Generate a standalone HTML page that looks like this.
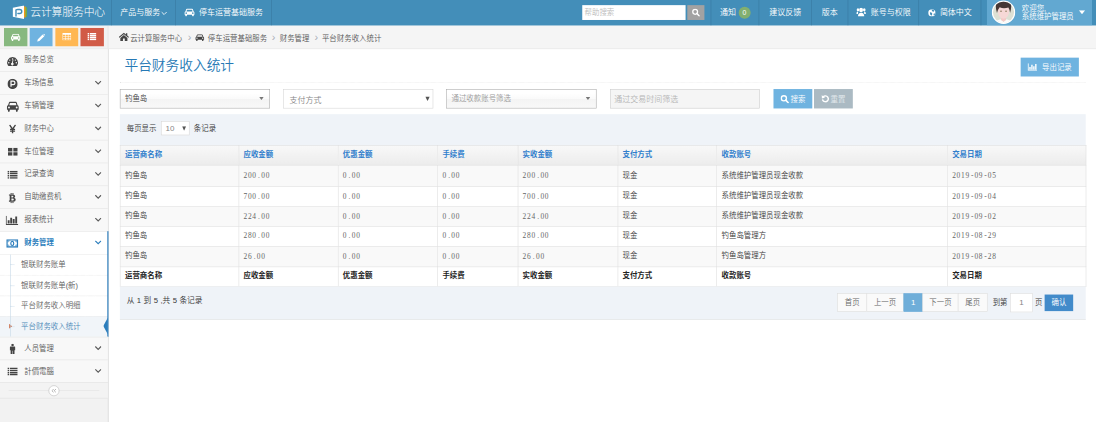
<!DOCTYPE html>
<html lang="zh-CN">
<head>
<meta charset="utf-8">
<title>平台财务收入统计</title>
<style>
*{box-sizing:border-box;margin:0;padding:0}
html,body{width:1096px;height:422px;overflow:hidden;background:#fff}
body{font-family:"Liberation Sans","Noto Sans CJK SC",sans-serif;font-size:13px;font-weight:350;color:#393939}
#stage{position:absolute;left:0;top:0;width:1920px;height:740px;transform:scale(0.5708333);transform-origin:0 0;background:#fff;overflow:hidden}
.abs{position:absolute}
svg{display:block}
/* navbar */
#navbar{position:absolute;left:0;top:0;width:1920px;height:45px;background:#438eb9;color:#fff}
#brand{position:absolute;left:53px;top:0;line-height:44px;font-size:19px;font-weight:300;color:#fff;white-space:nowrap;letter-spacing:-0.3px}
.nitem{position:absolute;top:0;height:45px;line-height:44px;font-size:14px;color:#fff;border-left:1px solid #38789f;white-space:nowrap;text-align:center}
.nitem svg{display:inline-block;vertical-align:middle}
/* sidebar */
#sidebar{position:absolute;left:0;top:45px;width:190px;height:695px;background:#f2f2f2;border-right:1px solid #ccc}
.sc{position:absolute;top:4px;width:40.5px;height:32px;border-radius:0}
.li{position:absolute;left:0;width:189px;height:40px;border-top:1px solid #e5e5e5;background:#f8f8f8;color:#585858;font-size:13px;line-height:39px}
.li .t{position:absolute;left:42.5px;top:-1.5px;white-space:nowrap}
.li .ic{position:absolute;left:7px;top:0;width:30px;height:39px}
.li .ar{position:absolute;right:11px;top:15px}
.sub{position:absolute;left:0;width:189px;height:36px;background:#fff;border-top:1px dotted #e4e4e4;color:#616161;font-size:13px;line-height:34px}
.sub .t{position:absolute;left:37px;top:0;white-space:nowrap}
.sub:before{content:"";position:absolute;left:18px;top:17px;width:7px;border-top:1px dotted #9dbdd6}
/* main */
#crumbs{position:absolute;left:190px;top:45px;width:1730px;height:41px;background:#f5f5f5;border-bottom:1px solid #e5e5e5;font-size:13px;color:#555;line-height:43px;white-space:nowrap}
#crumbs span{position:absolute;top:0}
h1{position:absolute;left:218px;top:102px;font-size:24px;font-weight:350;color:#2679b5;line-height:26px;white-space:nowrap}
.sel{position:absolute;top:156px;height:34px;width:263px;font-size:13px;line-height:32px;white-space:nowrap}
.btn{position:absolute;color:#fff;font-size:13px;text-align:center;white-space:nowrap}
table{position:absolute;left:210px;top:254px;width:1692px;border-collapse:collapse;table-layout:fixed;font-size:13px}
td,th{height:35.3px;padding:0 8px;border:1px solid #ddd;text-align:left;vertical-align:middle;white-space:nowrap;overflow:hidden}
thead th{color:#307ecc;font-weight:bold;background:linear-gradient(#f8f8f8,#ececec);border-bottom:1px solid #ddd}
tbody tr:nth-child(odd) td{background:#f9f9f9}
tbody td{color:#393939}
td,th{padding-bottom:4px}
thead th{height:35px;padding-bottom:5.4px}
tbody tr:first-child td{height:36.5px}
tfoot th{height:34.7px;padding-bottom:5.6px}
tbody tr:nth-child(n+4) td{padding-bottom:5.6px}
tbody tr:nth-child(n+4) td.m{padding-bottom:1.6px}
td.m{padding-bottom:0;font-family:"Liberation Serif",serif;color:#666;font-size:13px;letter-spacing:1.3px}
td.m i{display:inline-block;width:7.8px;text-align:center;letter-spacing:0;font-style:normal}
tfoot th{color:#222;font-weight:bold;background:#fff}
.pg{position:absolute;top:514px;height:32px;line-height:31px;border:1px solid #ddd;background:#fafafa;color:#666;font-size:13px;text-align:center;margin-left:-1px}
</style>
</head>
<body>
<div id="stage">

<!-- NAVBAR -->
<div id="navbar">
  <svg class="abs" style="left:21px;top:9px" width="28" height="25" viewBox="0 0 28 25">
    <path d="M20 2.500 H24 V21.500 H20 Z" fill="#f39c12"/>
    <path d="M24 3.500 H26.400 V20.500 H24 Z" fill="#6fae45"/>
    <path d="M1.500 4.500 L21 0.500 V24.500 L1.500 20.500 Z" fill="#fff"/>
    <path d="M7 19 V9.600 Q6 7.600 10 7.600 H13.600 A3.500 3.500 0 0 1 13.600 14.600 H10.400" fill="none" stroke="#438eb9" stroke-width="2.500" stroke-linecap="round"/>
  </svg>
  <div id="brand">云计算服务中心</div>
  <div class="nitem" style="left:195px;width:112px">产品与服务<svg width="11" height="7" viewBox="0 0 11 7" style="margin-left:1px"><path d="M1 1 L5.5 5.5 L10 1" fill="none" stroke="#fff" stroke-width="1.5"/></svg></div>
  <div class="nitem" style="left:307px;width:169px;border-right:1px solid #38789f">
    <svg width="18" height="14" viewBox="0 0 18 14" style="margin-right:8px;margin-top:-3px"><path d="M3.2 1.2 Q3.6 0 5 0 H13 Q14.4 0 14.8 1.2 L16.2 5 Q18 5.4 18 7.4 V11 H16.4 V12.6 Q16.4 14 15 14 Q13.6 14 13.6 12.6 V11 H4.4 V12.6 Q4.4 14 3 14 Q1.6 14 1.6 12.6 V11 H0 V7.4 Q0 5.4 1.8 5 Z M4.6 2 L3.6 5 H14.4 L13.4 2 Z M3.2 6.6 A1.4 1.4 0 1 0 3.2 9.4 A1.4 1.4 0 1 0 3.2 6.6 Z M14.8 6.6 A1.4 1.4 0 1 0 14.8 9.4 A1.4 1.4 0 1 0 14.8 6.6 Z" fill="#fff" fill-rule="evenodd"/></svg>停车运营基础服务</div>
  <!-- search -->
  <div class="abs" style="left:1020px;top:9px;width:181px;height:26px;background:#fff;color:#bbb;font-size:13px;line-height:26px;padding-left:4px">帮助搜索</div>
  <div class="abs" style="left:1204px;top:9px;width:30px;height:26px;background:#a2a2a2">
    <svg class="abs" style="left:8px;top:6px" width="14" height="14" viewBox="0 0 14 14"><circle cx="5.8" cy="5.8" r="4.2" fill="none" stroke="#fff" stroke-width="2.2"/><path d="M8.8 8.8 L13 13" stroke="#fff" stroke-width="2.6" stroke-linecap="round"/></svg>
  </div>
  <div class="nitem" style="left:1245px;width:85px"><span style="margin-right:4px">通知</span><span style="display:inline-block;vertical-align:middle;margin-top:-2px;height:21px;min-width:21px;line-height:21px;border-radius:11px;background:#82af6f;font-size:12px;padding:0 6px;color:#fff">0</span></div>
  <div class="nitem" style="left:1329px;width:92px">建议反馈</div>
  <div class="nitem" style="left:1421px;width:64px">版本</div>
  <div class="nitem" style="left:1485px;width:124px"><svg width="17" height="16" viewBox="0 0 17 14" preserveAspectRatio="none" style="margin-right:9px;margin-top:-4px"><circle cx="8.5" cy="4" r="3.4" fill="#fff"/><path d="M3 14 Q3 8 8.5 8 Q14 8 14 14 Z" fill="#fff"/><circle cx="3" cy="3.4" r="2.3" fill="#fff"/><circle cx="14" cy="3.4" r="2.3" fill="#fff"/><path d="M0 10 Q0 6 3.4 6.4 L3 10 Z M17 10 Q17 6 13.6 6.4 L14 10 Z" fill="#fff"/></svg>账号与权限</div>
  <div class="nitem" style="left:1609px;width:110px;border-right:1px solid #38789f"><svg width="13" height="13" viewBox="0 0 13 13" style="margin-right:8px;margin-top:-2px"><circle cx="6.5" cy="6.5" r="6.5" fill="#fff"/><path d="M6 1.200 Q9 0.600 11 2.400 Q10.600 4.400 8.400 4.600 Q6.400 3.600 6 1.200 Z M3 5.600 Q5.600 5.400 7 7.400 Q7.600 10 5.600 11.800 Q2.200 9.400 3 5.600 Z M9.600 8 Q11 7 12.400 7.800 Q12 10.200 10.200 11.400 Q9 10 9.600 8 Z" fill="#438eb9"/></svg>简体中文</div>
  <div class="abs" style="left:1729px;top:0;width:184px;height:45px;background:#62a8d1">
    <svg class="abs" style="left:8px;top:0" width="42" height="43" viewBox="0 0 42 43">
      <defs><clipPath id="avc"><circle cx="21" cy="21.5" r="18.6"/></clipPath></defs>
      <circle cx="21" cy="21.5" r="19.5" fill="#dde0d4" stroke="#fff" stroke-width="2"/>
      <g clip-path="url(#avc)"><g transform="translate(21 24) scale(1.22) translate(-21 -24)">
        <path d="M6 43 Q8 34 16.500 32 L21 35.500 L25.500 32 Q34 34 36 43 Z" fill="#fbfbfb"/>
        <path d="M17.500 28 H24.500 V33 L21 35.500 L17.500 33 Z" fill="#f3c9c6"/>
        <path d="M12.6 17 Q12.6 30.500 21 31.400 Q29.400 30.500 29.400 17 Q28 9 21 9 Q14 9 12.600 17 Z" fill="#f6d8d6"/>
        <path d="M11.6 23 Q6.500 6 17 5 Q21 3.500 25 5 Q35.500 6 30.400 23 Q30 18 28 15 Q21 17.500 15.500 14.600 Q12.600 18 11.600 23 Z" fill="#463735"/>
        <ellipse cx="17.4" cy="20.4" rx="1.3" ry="0.9" fill="#8a7a5c"/><ellipse cx="24.6" cy="20.4" rx="1.3" ry="0.9" fill="#8a7a5c"/>
      </g></g>
    </svg>
    <div class="abs" style="left:61px;top:7px;font-size:13px;line-height:15px;color:#fff;white-space:nowrap">欢迎您,<br>系统维护管理员</div>
    <svg class="abs" style="left:161px;top:18px" width="11" height="7" viewBox="0 0 11 7"><path d="M0 0 H11 L5.5 7 Z" fill="#fff"/></svg>
  </div>
</div>

<!-- SIDEBAR -->
<div id="sidebar">
  <div class="sc" style="left:7px;background:#87b87f"><svg class="abs" style="left:12px;top:10px" width="17" height="13" viewBox="0 0 18 14"><path d="M3.2 1.2 Q3.6 0 5 0 H13 Q14.4 0 14.8 1.2 L16.2 5 Q18 5.4 18 7.4 V11 H16.4 V12.6 Q16.4 14 15 14 Q13.6 14 13.6 12.6 V11 H4.4 V12.6 Q4.4 14 3 14 Q1.6 14 1.6 12.6 V11 H0 V7.4 Q0 5.4 1.8 5 Z M4.6 2 L3.6 5 H14.4 L13.4 2 Z M3.2 6.6 A1.4 1.4 0 1 0 3.2 9.4 A1.4 1.4 0 1 0 3.2 6.6 Z M14.8 6.6 A1.4 1.4 0 1 0 14.8 9.4 A1.4 1.4 0 1 0 14.8 6.6 Z" fill="#fff" fill-rule="evenodd"/></svg></div>
  <div class="sc" style="left:51.800px;background:#6fb3e0"><svg class="abs" style="left:13.500px;top:9.500px" width="14" height="14" viewBox="0 0 14 14"><path d="M0 14 L1 10 L9.6 1.4 L12.6 4.4 L4 13 Z M10.4 0.6 Q11.4 -0.4 12.4 0.6 L13.4 1.6 Q14.4 2.6 13.4 3.6 Z" fill="#fff"/></svg></div>
  <div class="sc" style="left:96.600px;background:#ffb752"><svg class="abs" style="left:12px;top:9px" width="16" height="12.500" viewBox="0 0 16 13"><path d="M0 0 H16 V13 H0 Z M1 3 V5.6 H5 V3 Z M6 3 V5.6 H10 V3 Z M11 3 V5.6 H15 V3 Z M1 6.6 V9 H5 V6.6 Z M6 6.6 V9 H10 V6.6 Z M11 6.6 V9 H15 V6.6 Z M1 10 V12 H5 V10 Z M6 10 V12 H10 V10 Z M11 10 V12 H15 V10 Z" fill="#fff" fill-rule="evenodd"/></svg></div>
  <div class="sc" style="left:141.400px;background:#d15b47"><svg class="abs" style="left:12px;top:9px" width="16" height="12.500" viewBox="0 0 16 13"><path d="M0 0 H3 V2.6 H0 Z M4.4 0 H16 V2.6 H4.4 Z M0 3.5 H3 V6 H0 Z M4.4 3.5 H16 V6 H4.4 Z M0 7 H3 V9.5 H0 Z M4.4 7 H16 V9.5 H4.4 Z M0 10.4 H3 V13 H0 Z M4.4 10.4 H16 V13 H4.4 Z" fill="#fff"/></svg></div>
  <div class="li" style="top:40px"><div class="ic"><svg class="abs" style="left:5px;top:14px" width="20" height="17" viewBox="0 0 18 16"><path d="M9 0 A9 9 0 0 1 16.6 13.8 Q16.2 14.6 15.4 14.6 H2.6 Q1.8 14.6 1.4 13.8 A9 9 0 0 1 9 0 Z" fill="#444"/><circle cx="9" cy="3" r="1.2" fill="#f8f8f8"/><circle cx="4.4" cy="5" r="1.2" fill="#f8f8f8"/><circle cx="13.6" cy="5" r="1.2" fill="#f8f8f8"/><circle cx="2.8" cy="9.4" r="1.2" fill="#f8f8f8"/><circle cx="15.2" cy="9.4" r="1.2" fill="#f8f8f8"/><path d="M10.4 4.6 L9.6 9.4 A2.2 2.2 0 1 1 8 9.2 L9.2 4.4 Z" fill="#f8f8f8"/></svg></div><span class="t">服务总览</span></div>
  <div class="li" style="top:80px"><div class="ic"><svg class="abs" style="left:6px;top:12px" width="18" height="18" viewBox="0 0 16 16"><circle cx="8" cy="8" r="8" fill="#444"/><path d="M5.6 12.4 V3.8 H9 A2.7 2.7 0 0 1 9 9.2 H6.4" fill="none" stroke="#f8f8f8" stroke-width="1.9"/></svg></div><span class="t">车场信息</span><svg class="ar" width="12" height="8" viewBox="0 0 12 8"><path d="M1 1 L6 6 L11 1" fill="none" stroke="#5a5a5a" stroke-width="2"/></svg></div>
  <div class="li" style="top:120px"><div class="ic"><svg class="abs" style="left:5px;top:12px" width="21" height="18" viewBox="0 0 18 14" preserveAspectRatio="none"><path d="M3.2 1.2 Q3.6 0 5 0 H13 Q14.4 0 14.8 1.2 L16.2 5 Q18 5.4 18 7.4 V11 H16.4 V12.6 Q16.4 14 15 14 Q13.6 14 13.6 12.6 V11 H4.4 V12.6 Q4.4 14 3 14 Q1.6 14 1.6 12.6 V11 H0 V7.4 Q0 5.4 1.8 5 Z M4.6 2 L3.6 5 H14.4 L13.4 2 Z M3.2 6.6 A1.4 1.4 0 1 0 3.2 9.4 A1.4 1.4 0 1 0 3.2 6.6 Z M14.8 6.6 A1.4 1.4 0 1 0 14.8 9.4 A1.4 1.4 0 1 0 14.8 6.6 Z" fill="#444" fill-rule="evenodd"/></svg></div><span class="t">车辆管理</span><svg class="ar" width="12" height="8" viewBox="0 0 12 8"><path d="M1 1 L6 6 L11 1" fill="none" stroke="#5a5a5a" stroke-width="2"/></svg></div>
  <div class="li" style="top:160px"><div class="ic"><svg class="abs" style="left:9px;top:12px" width="12" height="16" viewBox="0 0 12 16"><path d="M0.8 0.6 L6 8.4 L11.2 0.6 M6 8 V16 M1.6 8.6 H10.4 M1.6 11.8 H10.4" fill="none" stroke="#444" stroke-width="2.4"/></svg></div><span class="t">财务中心</span><svg class="ar" width="12" height="8" viewBox="0 0 12 8"><path d="M1 1 L6 6 L11 1" fill="none" stroke="#5a5a5a" stroke-width="2"/></svg></div>
  <div class="li" style="top:200px"><div class="ic"><svg class="abs" style="left:7px;top:13px" width="17" height="14" viewBox="0 0 17 14"><path d="M0 0 H7.6 V6.2 H0 Z M9.4 0 H17 V6.2 H9.4 Z M0 7.8 H7.6 V14 H0 Z M9.4 7.8 H17 V14 H9.4 Z" fill="#444"/></svg></div><span class="t">车位管理</span><svg class="ar" width="12" height="8" viewBox="0 0 12 8"><path d="M1 1 L6 6 L11 1" fill="none" stroke="#5a5a5a" stroke-width="2"/></svg></div>
  <div class="li" style="top:240px"><div class="ic"><svg class="abs" style="left:6px;top:13px" width="18" height="14" viewBox="0 0 18 14"><path d="M0 0 H3 V2.6 H0 Z M4.4 0 H18 V2.6 H4.4 Z M0 3.8 H3 V6.4 H0 Z M4.4 3.8 H18 V6.4 H4.4 Z M0 7.6 H3 V10.2 H0 Z M4.4 7.6 H18 V10.2 H4.4 Z M0 11.4 H3 V14 H0 Z M4.4 11.4 H18 V14 H4.4 Z" fill="#444"/></svg></div><span class="t">记录查询</span><svg class="ar" width="12" height="8" viewBox="0 0 12 8"><path d="M1 1 L6 6 L11 1" fill="none" stroke="#5a5a5a" stroke-width="2"/></svg></div>
  <div class="li" style="top:280px"><div class="ic"><svg class="abs" style="left:8px;top:12px" width="13" height="18" viewBox="0 0 13 18"><path d="M0.500 2.600 H7.200 Q11.600 2.600 11.600 5.800 Q11.600 7.800 9.800 8.600 Q12.600 9.200 12.600 12 Q12.600 15.400 8 15.400 H0.500 V13.400 H2 V4.600 H0.500 Z M5 4.800 V7.800 H6.600 Q8.400 7.800 8.400 6.300 Q8.400 4.800 6.600 4.800 Z M5 9.800 V13.200 H7 Q9.200 13.200 9.200 11.500 Q9.200 9.800 7 9.800 Z M3.600 0 H5.400 V3 H3.600 Z M6.800 0 H8.600 V3 H6.800 Z M3.600 15 H5.400 V18 H3.600 Z M6.800 15 H8.600 V18 H6.800 Z" fill="#444" fill-rule="evenodd"/></svg></div><span class="t">自助缴费机</span><svg class="ar" width="12" height="8" viewBox="0 0 12 8"><path d="M1 1 L6 6 L11 1" fill="none" stroke="#5a5a5a" stroke-width="2"/></svg></div>
  <div class="li" style="top:320px"><div class="ic"><svg class="abs" style="left:3px;top:12px" width="22" height="16" viewBox="0 0 20 16" preserveAspectRatio="none"><path d="M0 0 H1.500 V14.500 H20 V16 H0 Z M3.200 8 H6.200 V13.400 H3.200 Z M7.200 3.400 H10.200 V13.400 H7.200 Z M11.200 5.800 H14.200 V13.400 H11.200 Z M15.200 1.400 H18.200 V13.400 H15.200 Z" fill="#444"/></svg></div><span class="t">报表统计</span><svg class="ar" width="12" height="8" viewBox="0 0 12 8"><path d="M1 1 L6 6 L11 1" fill="none" stroke="#5a5a5a" stroke-width="2"/></svg></div>
  <div class="li" style="top:360px;color:#2b7dbc;font-weight:bold;background:#fff"><div class="ic"><svg class="abs" style="left:4px;top:13px" width="21" height="15" viewBox="0 0 21 15"><path d="M0 0 H21 V15 H0 Z M2.400 2.400 V12.600 H18.600 V2.400 Z" fill="#2b7dbc" fill-rule="evenodd"/><path d="M2 6 Q6 6 6 2 H2 Z M19 6 Q15 6 15 2 H19 Z M2 9 Q6 9 6 13 H2 Z M19 9 Q15 9 15 13 H19 Z" fill="#2b7dbc" opacity="0.550"/><ellipse cx="10.500" cy="7.500" rx="2.600" ry="3.600" fill="none" stroke="#2b7dbc" stroke-width="2"/></svg></div><span class="t">财务管理</span><svg class="ar" width="12" height="8" viewBox="0 0 12 8"><path d="M1 1 L6 6 L11 1" fill="none" stroke="#2b7dbc" stroke-width="2"/></svg></div>
  <div class="abs" style="left:0;top:400px;width:189px;height:1px;background:#e5e5e5"></div>
  <div class="sub" style="top:401px;border-top:0"><span class="t">银联财务账单</span></div>
  <div class="sub" style="top:437px"><span class="t">银联财务账单(新)</span></div>
  <div class="sub" style="top:473px"><span class="t">平台财务收入明细</span></div>
  <div class="sub" style="top:509px;color:#4b88b7;background:#f1f5f9"><span class="t">平台财务收入统计</span><svg class="abs" style="left:16px;top:12px" width="5" height="9" viewBox="0 0 5 9"><path d="M0 0 L5 4.500 L0 9 Z" fill="#c86139"/></svg></div>
  <div class="abs" style="left:18px;top:401px;height:144px;border-left:1px solid #c4d7e6"></div>
  <div class="abs" style="left:188px;top:360px;width:2.300px;height:185px;background:#2b7dbc"></div>
  <svg class="abs" style="left:181px;top:511px" width="8" height="30" viewBox="0 0 8 30"><path d="M8 0 L0 15 L8 30 Z" fill="#2b7dbc"/></svg>
  <div class="li" style="top:545px"><div class="ic"><svg class="abs" style="left:10px;top:11px" width="10" height="18" viewBox="0 0 10 18"><circle cx="5" cy="2.2" r="2.2" fill="#444"/><path d="M0 6.6 Q0 5 1.6 5 H8.4 Q10 5 10 6.6 V11.4 H8.4 V18 H5.4 V12.6 H4.6 V18 H1.6 V11.4 H0 Z" fill="#444"/></svg></div><span class="t" style="top:0.3px">人员管理</span><svg class="ar" width="12" height="8" viewBox="0 0 12 8"><path d="M1 1 L6 6 L11 1" fill="none" stroke="#5a5a5a" stroke-width="2"/></svg></div>
  <div class="li" style="top:585px"><div class="ic"><svg class="abs" style="left:6px;top:13px" width="18" height="14" viewBox="0 0 18 14"><path d="M0 0 H3 V2.6 H0 Z M4.4 0 H18 V2.6 H4.4 Z M0 3.8 H3 V6.4 H0 Z M4.4 3.8 H18 V6.4 H4.4 Z M0 7.6 H3 V10.2 H0 Z M4.4 7.6 H18 V10.2 H4.4 Z M0 11.4 H3 V14 H0 Z M4.4 11.4 H18 V14 H4.4 Z" fill="#444"/></svg></div><span class="t" style="top:0.3px">計價電腦</span><svg class="ar" width="12" height="8" viewBox="0 0 12 8"><path d="M1 1 L6 6 L11 1" fill="none" stroke="#5a5a5a" stroke-width="2"/></svg></div>
  <div class="abs" style="left:0;top:625px;width:189px;height:28px;background:#f3f3f3;border-top:1px solid #e0e0e0;border-bottom:1px solid #e0e0e0"><div class="abs" style="left:15px;top:13px;width:159px;height:1px;background:#e0e0e0"></div><div class="abs" style="left:85px;top:4px;width:19px;height:19px;border-radius:10px;border:1px solid #bbb;background:#fff;color:#aaa;font-size:11px;line-height:15px;text-align:center"><svg class="abs" style="left:4px;top:5px" width="9" height="7" viewBox="0 0 9 7"><path d="M4 0.500 L1 3.500 L4 6.500 M8 0.500 L5 3.500 L8 6.500" fill="none" stroke="#999" stroke-width="1.3"/></svg></div></div>
</div>

<!-- BREADCRUMBS -->
<div id="crumbs">
  <svg class="abs" style="left:18px;top:12.300px" width="18" height="15" viewBox="0 0 18 15"><path d="M9 0.4 L0 8 L1.2 9.2 L9 2.8 L16.8 9.2 L18 8 L15 5.4 V1.4 H12.6 V3.4 Z M9 4.4 L2.8 9.6 V15 H7.4 V10.6 H10.6 V15 H15.2 V9.6 Z" fill="#444"/></svg>
  <span style="left:38px">云计算服务中心</span>
  <span style="left:139px;color:#a8acb5;font-size:19px;margin-top:-1px">›</span>
  <svg class="abs" style="left:152px;top:14.700px" width="16" height="12" viewBox="0 0 18 14"><path d="M3.2 1.2 Q3.6 0 5 0 H13 Q14.4 0 14.8 1.2 L16.2 5 Q18 5.4 18 7.4 V11 H16.4 V12.6 Q16.4 14 15 14 Q13.6 14 13.6 12.6 V11 H4.4 V12.6 Q4.4 14 3 14 Q1.6 14 1.6 12.6 V11 H0 V7.4 Q0 5.4 1.8 5 Z M4.6 2 L3.6 5 H14.4 L13.4 2 Z M3.2 6.6 A1.4 1.4 0 1 0 3.2 9.4 A1.4 1.4 0 1 0 3.2 6.6 Z M14.8 6.6 A1.4 1.4 0 1 0 14.8 9.4 A1.4 1.4 0 1 0 14.8 6.6 Z" fill="#444" fill-rule="evenodd"/></svg>
  <span style="left:174px">停车运营基础服务</span>
  <span style="left:286px;color:#a8acb5;font-size:19px;margin-top:-1px">›</span>
  <span style="left:300px">财务管理</span>
  <span style="left:361px;color:#a8acb5;font-size:19px;margin-top:-1px">›</span>
  <span style="left:374px">平台财务收入统计</span>
</div>

<!-- PAGE HEADER -->
<h1>平台财务收入统计</h1>
<div class="btn" style="left:1788px;top:101px;width:102px;height:33px;line-height:33px;background:#6fb3e0"><svg style="display:inline-block;vertical-align:middle;margin:-3px 8px 0 0" width="17" height="13" viewBox="0 0 20 16"><path d="M0 0 H2 V14 H20 V16 H0 Z M3.4 8 H6.4 V13 H3.4 Z M7.6 3 H10.6 V13 H7.6 Z M11.8 6 H14.8 V13 H11.8 Z M16 1.6 H19 V13 H16 Z" fill="#fff"/></svg>导出记录</div>
<div class="abs" style="left:210px;top:144px;width:1692px;border-top:1px dotted #e2e2e2"></div>

<!-- FILTERS -->
<div class="sel" style="left:210px;border:1px solid #aaa;background:linear-gradient(#fff 20%,#fafafa 50%,#f4f4f4 52%,#f8f8f8);color:#444;padding-left:8px;border-radius:0">钓鱼岛<svg class="abs" style="right:10px;top:13px" width="8" height="5" viewBox="0 0 8 5"><path d="M0 0 H8 L4 5 Z" fill="#777"/></svg></div>
<div class="sel" style="left:496px;border:1px solid #d5d5d5;background:#fff;color:#858585;padding-left:10px;line-height:37px;font-size:14px">支付方式<svg class="abs" style="right:5px;top:12px" width="8" height="8" viewBox="0 0 8 8"><path d="M0 0 H8 L4 8 Z" fill="#555"/></svg></div>
<div class="sel" style="left:782px;border:1px solid #aaa;background:linear-gradient(#fff 20%,#fafafa 50%,#f4f4f4 52%,#f8f8f8);color:#999;padding-left:8px">通过收款账号筛选<svg class="abs" style="right:10px;top:13px" width="8" height="5" viewBox="0 0 8 5"><path d="M0 0 H8 L4 5 Z" fill="#777"/></svg></div>
<div class="sel" style="left:1069px;width:262px;border:1px solid #ccc;background:#f5f5f5;color:#b5b5b5;padding-left:6px;font-size:14px;line-height:35px">通过交易时间筛选</div>
<div class="btn" style="left:1355px;top:156px;width:68px;height:34px;line-height:36px;background:#6fb3e0"><svg style="display:inline-block;vertical-align:middle;margin:-3px 3px 0 0" width="15" height="15" viewBox="0 0 14 14"><circle cx="5.8" cy="5.8" r="4.2" fill="none" stroke="#fff" stroke-width="2.2"/><path d="M8.8 8.8 L13 13" stroke="#fff" stroke-width="2.6" stroke-linecap="round"/></svg>搜索</div>
<div class="btn" style="left:1426px;top:156px;width:68px;height:34px;line-height:36px;background:#abbac3;color:#e4eaee"><svg style="display:inline-block;vertical-align:middle;margin:-3px 2px 0 0" width="14" height="14" viewBox="0 0 12 12"><path d="M2.6 3.2 A4.4 4.4 0 1 1 1.6 6.8" fill="none" stroke="#fff" stroke-width="2.2"/><path d="M0.2 0.4 L0.6 5.6 L5.4 4.6 Z" fill="#fff"/></svg>重置</div>

<!-- TABLE TOP BAR -->
<div class="abs" style="left:210px;top:200px;width:1692px;height:55px;background:#eff3f8"></div>
<div class="abs" style="left:222px;top:200px;line-height:50px;font-size:13px;color:#393939;white-space:nowrap">每页显示</div>
<div class="abs" style="left:282px;top:212px;width:50px;height:25px;border:1px solid #d5d5d5;background:#fff;color:#858585;font-size:14px;line-height:24px;padding-left:7px">10<svg class="abs" style="left:36px;top:8px" width="7" height="8" viewBox="0 0 7 8"><path d="M0 0 H7 L3.500 8 Z" fill="#555"/></svg></div>
<div class="abs" style="left:339.5px;top:200px;line-height:50px;font-size:13px;color:#393939;white-space:nowrap">条记录</div>
<table>
<colgroup><col style="width:207.5px"><col style="width:174px"><col style="width:174.5px"><col style="width:140.5px"><col style="width:175px"><col style="width:173.5px"><col style="width:404px"><col style="width:243px"></colgroup>
<thead><tr><th>运营商名称</th><th>应收金额</th><th>优惠金额</th><th>手续费</th><th>实收金额</th><th>支付方式</th><th>收款账号</th><th>交易日期</th></tr></thead>
<tbody>
<tr><td>钓鱼岛</td><td class="m">200<i>.</i>00</td><td class="m">0<i>.</i>00</td><td class="m">0<i>.</i>00</td><td class="m">200<i>.</i>00</td><td>现金</td><td>系统维护管理员现金收款</td><td class="m">2019<i>-</i>09<i>-</i>05</td></tr>
<tr><td>钓鱼岛</td><td class="m">700<i>.</i>00</td><td class="m">0<i>.</i>00</td><td class="m">0<i>.</i>00</td><td class="m">700<i>.</i>00</td><td>现金</td><td>系统维护管理员现金收款</td><td class="m">2019<i>-</i>09<i>-</i>04</td></tr>
<tr><td>钓鱼岛</td><td class="m">224<i>.</i>00</td><td class="m">0<i>.</i>00</td><td class="m">0<i>.</i>00</td><td class="m">224<i>.</i>00</td><td>现金</td><td>系统维护管理员现金收款</td><td class="m">2019<i>-</i>09<i>-</i>02</td></tr>
<tr><td>钓鱼岛</td><td class="m">280<i>.</i>00</td><td class="m">0<i>.</i>00</td><td class="m">0<i>.</i>00</td><td class="m">280<i>.</i>00</td><td>现金</td><td>钓鱼岛管理方</td><td class="m">2019<i>-</i>08<i>-</i>29</td></tr>
<tr><td>钓鱼岛</td><td class="m">26<i>.</i>00</td><td class="m">0<i>.</i>00</td><td class="m">0<i>.</i>00</td><td class="m">26<i>.</i>00</td><td>现金</td><td>钓鱼岛管理方</td><td class="m">2019<i>-</i>08<i>-</i>28</td></tr>
</tbody>
<tfoot><tr><th>运营商名称</th><th>应收金额</th><th>优惠金额</th><th>手续费</th><th>实收金额</th><th>支付方式</th><th>收款账号</th><th>交易日期</th></tr></tfoot>
</table>

<!-- TABLE BOTTOM BAR -->
<div class="abs" style="left:210px;top:502px;width:1692px;height:58px;background:#eff3f8;border-bottom:1px solid #e0e0e0"></div>
<div class="abs" style="left:222px;top:516px;font-size:13.500px;line-height:20px;color:#393939;white-space:nowrap;word-spacing:0.500px">从 1 到 5 ,共 5 条记录</div>
<div class="pg" style="left:1468px;width:52px">首页</div>
<div class="pg" style="left:1519px;width:65px">上一页</div>
<div class="pg" style="left:1584px;width:34px;background:#6faed9;border-color:#6faed9;color:#fff;font-size:14px">1</div>
<div class="pg" style="left:1617px;width:63px">下一页</div>
<div class="pg" style="left:1679px;width:52px">尾页</div>
<div class="abs" style="left:1739px;top:515px;line-height:31px;font-size:13px;color:#393939;white-space:nowrap">到第</div>
<div class="abs" style="left:1770px;top:514px;width:39px;height:33px;border:1px solid #ddd;background:#fff;color:#858585;font-size:13px;line-height:31px;text-align:center;font-size:14px">1</div>
<div class="abs" style="left:1813px;top:515px;line-height:31px;font-size:13px;color:#393939;white-space:nowrap">页</div>
<div class="btn" style="left:1830px;top:516px;width:50px;height:29px;line-height:29px;background:#428bca">确认</div>

</div>
</body>
</html>
